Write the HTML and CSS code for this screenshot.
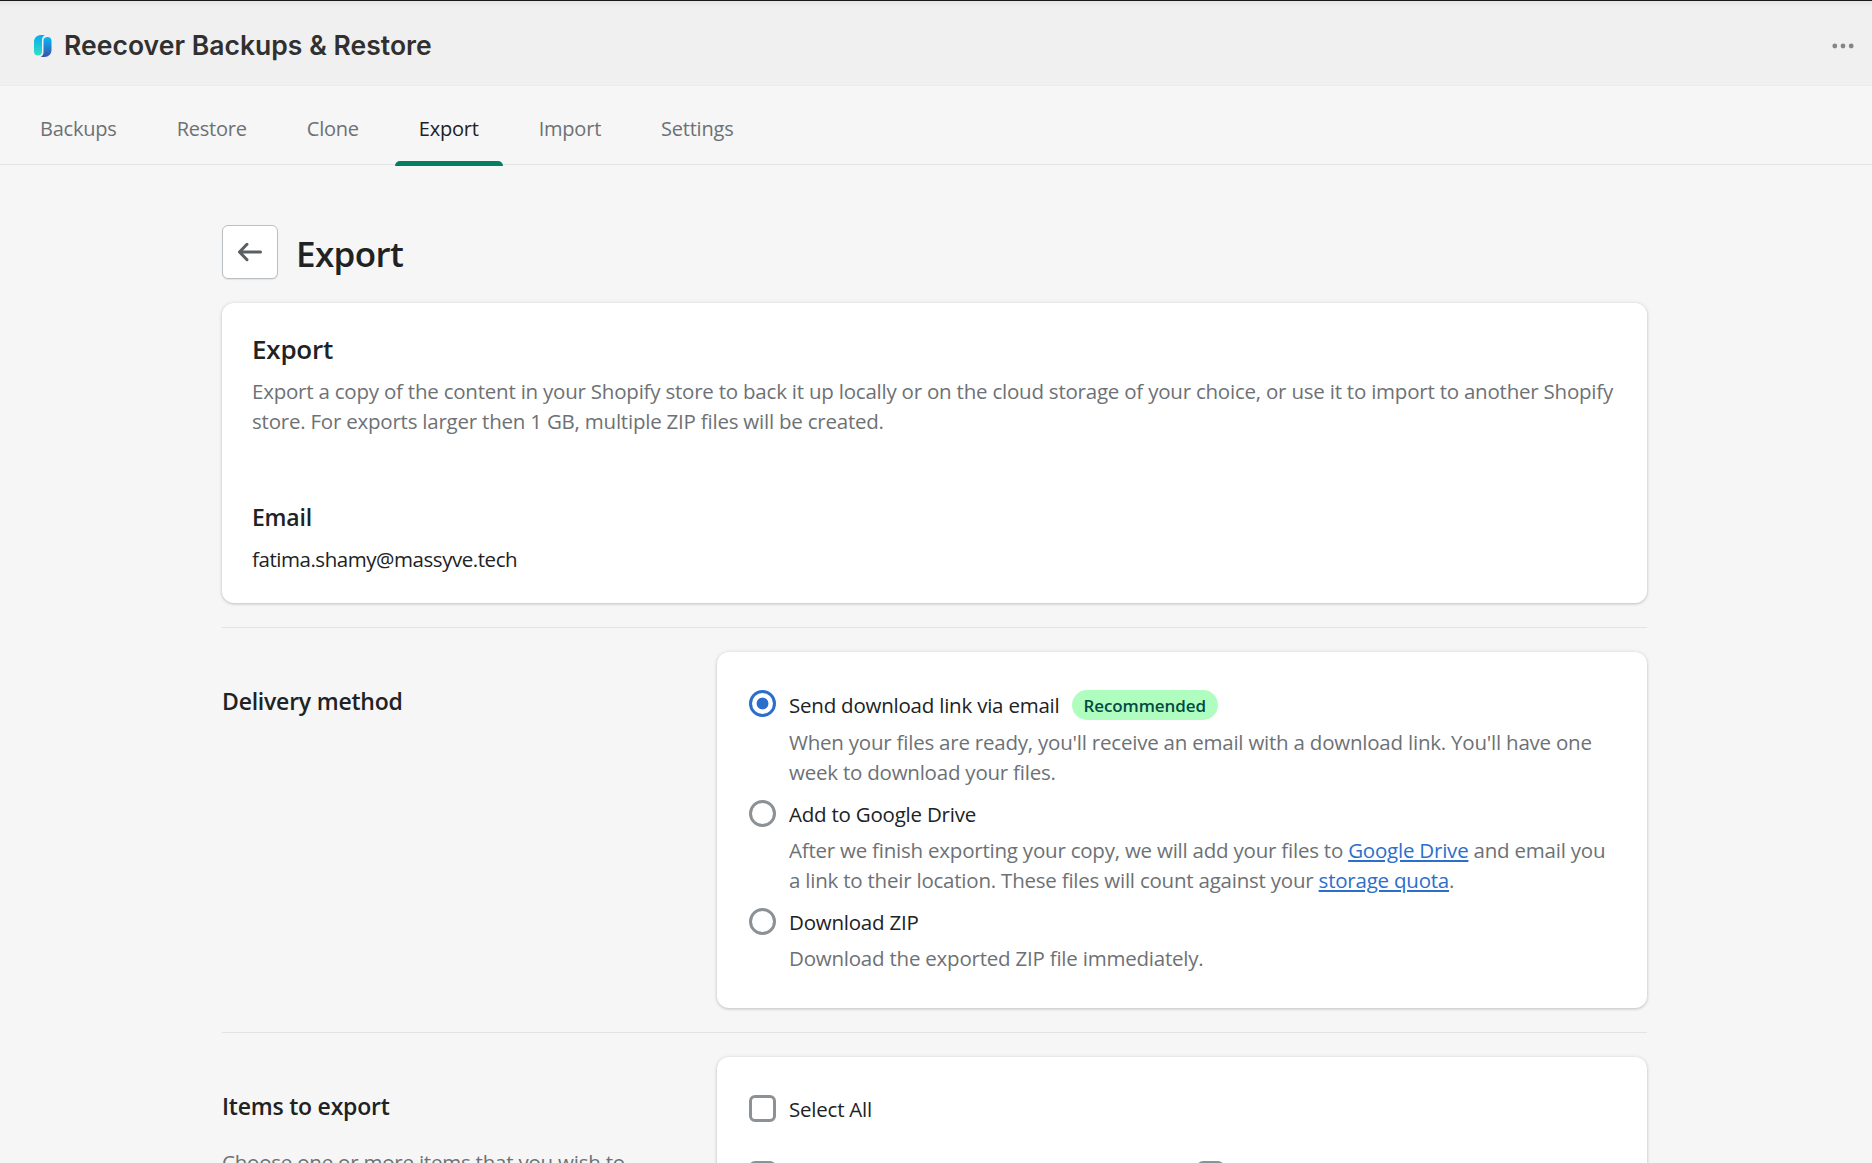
FILE: index.html
```html
<!DOCTYPE html>
<html lang="en">
<head>
    <meta charset="UTF-8">
    <title>Reecover Backups & Restore</title>
    <link rel="stylesheet" href="styles.css">
</head>
<body>

<header class="app-header">
    <svg class="app-logo" width="20" height="24" viewBox="0 0 20 24">
        <defs>
            <linearGradient id="logo-left" x1="0" y1="0" x2="0" y2="1">
                <stop offset="0" stop-color="#08a8f4"/>
                <stop offset="1" stop-color="#2fe3c0"/>
            </linearGradient>
            <linearGradient id="logo-right" x1="0" y1="0" x2="0" y2="1">
                <stop offset="0" stop-color="#08b8f8"/>
                <stop offset="1" stop-color="#3a50a8"/>
            </linearGradient>
        </defs>
        <path fill="url(#logo-left)" d="M1 8C1 4 4 1 8 1h4C10 2 9 3.500 9 6v12c0 2-1.500 3.500-4 3.500S1 20 1 17.500z"/>
        <path fill="url(#logo-right)" d="M10.500 6.500c0-2 1.500-3.500 4-3.500s4 1.500 4 4v9c0 4-3 7-7 7H7.500c2-1 3-2.500 3-5z"/>
    </svg>
    <h1 class="app-title">Reecover Backups &amp; Restore</h1>
    <svg class="app-more" width="22" height="6" viewBox="0 0 22 6" fill="#858585">
        <circle cx="2.800" cy="3" r="2.400"/>
        <circle cx="11" cy="3" r="2.400"/>
        <circle cx="19.200" cy="3" r="2.400"/>
    </svg>
</header>

<nav class="tabs">
    <a class="tab" href="#">Backups</a>
    <a class="tab" href="#">Restore</a>
    <a class="tab" href="#">Clone</a>
    <a class="tab active" href="#">Export</a>
    <a class="tab" href="#">Import</a>
    <a class="tab" href="#">Settings</a>
</nav>

<main class="page">
    <div class="page-header">
        <button class="back">
            <svg width="26" height="20" viewBox="0 0 26 20" fill="none" stroke="#5c5f62" stroke-width="3" stroke-linecap="round" stroke-linejoin="round">
                <path d="M23.500 10H2.500M10 2.300L2.500 10L10 17.700"/>
            </svg>
        </button>
        <h1 class="page-title">Export</h1>
    </div>

    <section class="card intro">
        <h2>Export</h2>
        <p class="subdued">Export a copy of the content in your Shopify store to back it up locally or on the cloud storage of your choice, or use it to import to another Shopify<br>store. For exports larger then 1 GB, multiple ZIP files will be created.</p>
        <h3>Email</h3>
        <p class="email">fatima.shamy@massyve.tech</p>
    </section>

    <section class="section">
        <div class="section-text">
            <h3>Delivery method</h3>
        </div>
        <div class="card options">
            <div class="choice recommended">
                <div class="radio checked"></div>
                <div class="label">Send download link via email</div>
                <div class="badge">Recommended</div>
            </div>
            <p class="help">When your files are ready, you'll receive an email with a download link. You'll have one<br>week to download your files.</p>
            <div class="choice">
                <div class="radio"></div>
                <div class="label">Add to Google Drive</div>
            </div>
            <p class="help">After we finish exporting your copy, we will add your files to <a href="#">Google Drive</a> and email you<br>a link to their location. These files will count against your <a href="#">storage quota</a>.</p>
            <div class="choice">
                <div class="radio"></div>
                <div class="label">Download ZIP</div>
            </div>
            <p class="help">Download the exported ZIP file immediately.</p>
        </div>
    </section>

    <section class="section">
        <div class="section-text">
            <h3>Items to export</h3>
            <p class="subdued">Choose one or more items that you wish to</p>
        </div>
        <div class="card options">
            <div class="choice">
                <div class="checkbox"></div>
                <div class="label">Select All</div>
            </div>
            <div class="item-grid">
                <div class="checkbox"></div>
                <div class="checkbox"></div>
            </div>
        </div>
    </section>
</main>

</body>
</html>
```
FILE: styles.css
```css
* {
    box-sizing: border-box;
}

body {
    margin: 0;
    height: 1163px;
    overflow: hidden;
    background-color: #f6f6f6;
    color: #202223;
    font-family: "Open Sans", "Noto Sans", sans-serif;
    font-size: 20.5px;
    line-height: 30px;
    letter-spacing: -0.22px;
}

h1, h2, h3, p {
    margin: 0;
    font-weight: 600;
}

p {
    font-weight: 400;
}

a {
    color: #2c6ecb;
    text-decoration-thickness: 2px;
    text-underline-offset: 2px;
}

.app-header {
    display: flex;
    align-items: center;
    height: 86px;
    padding: 5px 18px 0 33px;
    border-top: 1px solid #1a1a1a;
    border-bottom: 1px solid #ebebeb;
    background: linear-gradient(#e6e4e5, #f0f0f0 6px);
}

.app-title {
    margin-left: 11px;
    padding-bottom: 1px;
    color: #303030;
    font-family: Inter, sans-serif;
    font-size: 26.5px;
    letter-spacing: 0.04px;
}

.app-more {
    margin-left: auto;
}

.tabs {
    display: flex;
    gap: 12px;
    height: 79px;
    padding-left: 16px;
    border-bottom: 1px solid #e1e3e5;
    font-size: 20px;
    letter-spacing: -0.22px;
}

.tab {
    position: relative;
    padding: 28px 24px 0;
    color: #6d7175;
    text-decoration: none;
}

.tab.active {
    color: #202223;
}

.tab.active::after {
    content: "";
    position: absolute;
    left: 0;
    right: 0;
    bottom: -2px;
    height: 5px;
    border-radius: 5px 5px 0 0;
    background-color: #008060;
}

.page {
    width: 1425px;
    margin-left: 222px;
    padding-top: 60px;
}

.page-header {
    display: flex;
    gap: 18px;
    height: 78px;
}

.back {
    display: flex;
    align-items: center;
    justify-content: center;
    width: 56px;
    height: 54px;
    padding: 0;
    border: 1px solid #babfc3;
    border-radius: 6px;
    background-color: #fff;
    box-shadow: 0 1px 1px rgba(0, 0, 0, 0.08);
}

.page-title {
    padding-top: 8px;
    font-size: 35px;
    line-height: 42px;
    letter-spacing: -0.6px;
}

.card {
    border-radius: 12px;
    background-color: #fff;
    box-shadow: 0 0 5px rgba(23, 24, 24, 0.08), 0 1px 3px rgba(0, 0, 0, 0.18);
}

.intro {
    height: 300px;
    padding: 31px 30px;
}

.intro h2 {
    margin-bottom: 12px;
    font-size: 26px;
}

.intro h3 {
    margin: 66px 0 12px;
}

h3 {
    font-size: 23px;
}

.email {
    letter-spacing: -0.45px;
}

.subdued,
.help {
    color: #6d7175;
}

.section {
    display: flex;
    margin-top: 24px;
    padding-top: 24px;
    border-top: 1px solid #e1e3e5;
}

.section-text {
    width: 495px;
    padding-top: 34px;
}

.section-text p {
    margin-top: 26px;
}

.options {
    flex: 1;
    padding: 37px 32px 35px;
}

.choice {
    display: flex;
    align-items: flex-start;
    height: 30px;
}

.recommended {
    align-items: center;
    height: 32px;
}

.label {
    margin-left: 13px;
}

.help {
    margin: 6px 0 12px 40px;
}

.help:last-child {
    margin-bottom: 0;
}

.radio,
.checkbox {
    width: 27px;
    height: 27px;
    margin-top: 1px;
    border: 3px solid #8c9196;
    border-radius: 50%;
}

.checkbox {
    border-radius: 6px;
}

.radio.checked {
    margin: 0 0 3px;
    border-color: #2c6ecb;
    background: radial-gradient(circle, #2c6ecb 5.5px, #fff 6.3px);
}

.badge {
    height: 30px;
    margin-left: 12px;
    padding: 1px 12px 0;
    border-radius: 15px;
    background-color: #affebf;
    color: #014b40;
    font-size: 17px;
    font-weight: 600;
    letter-spacing: -0.1px;
}

.item-grid {
    display: grid;
    grid-template-columns: 448px 1fr;
    margin-top: 36px;
}
```
